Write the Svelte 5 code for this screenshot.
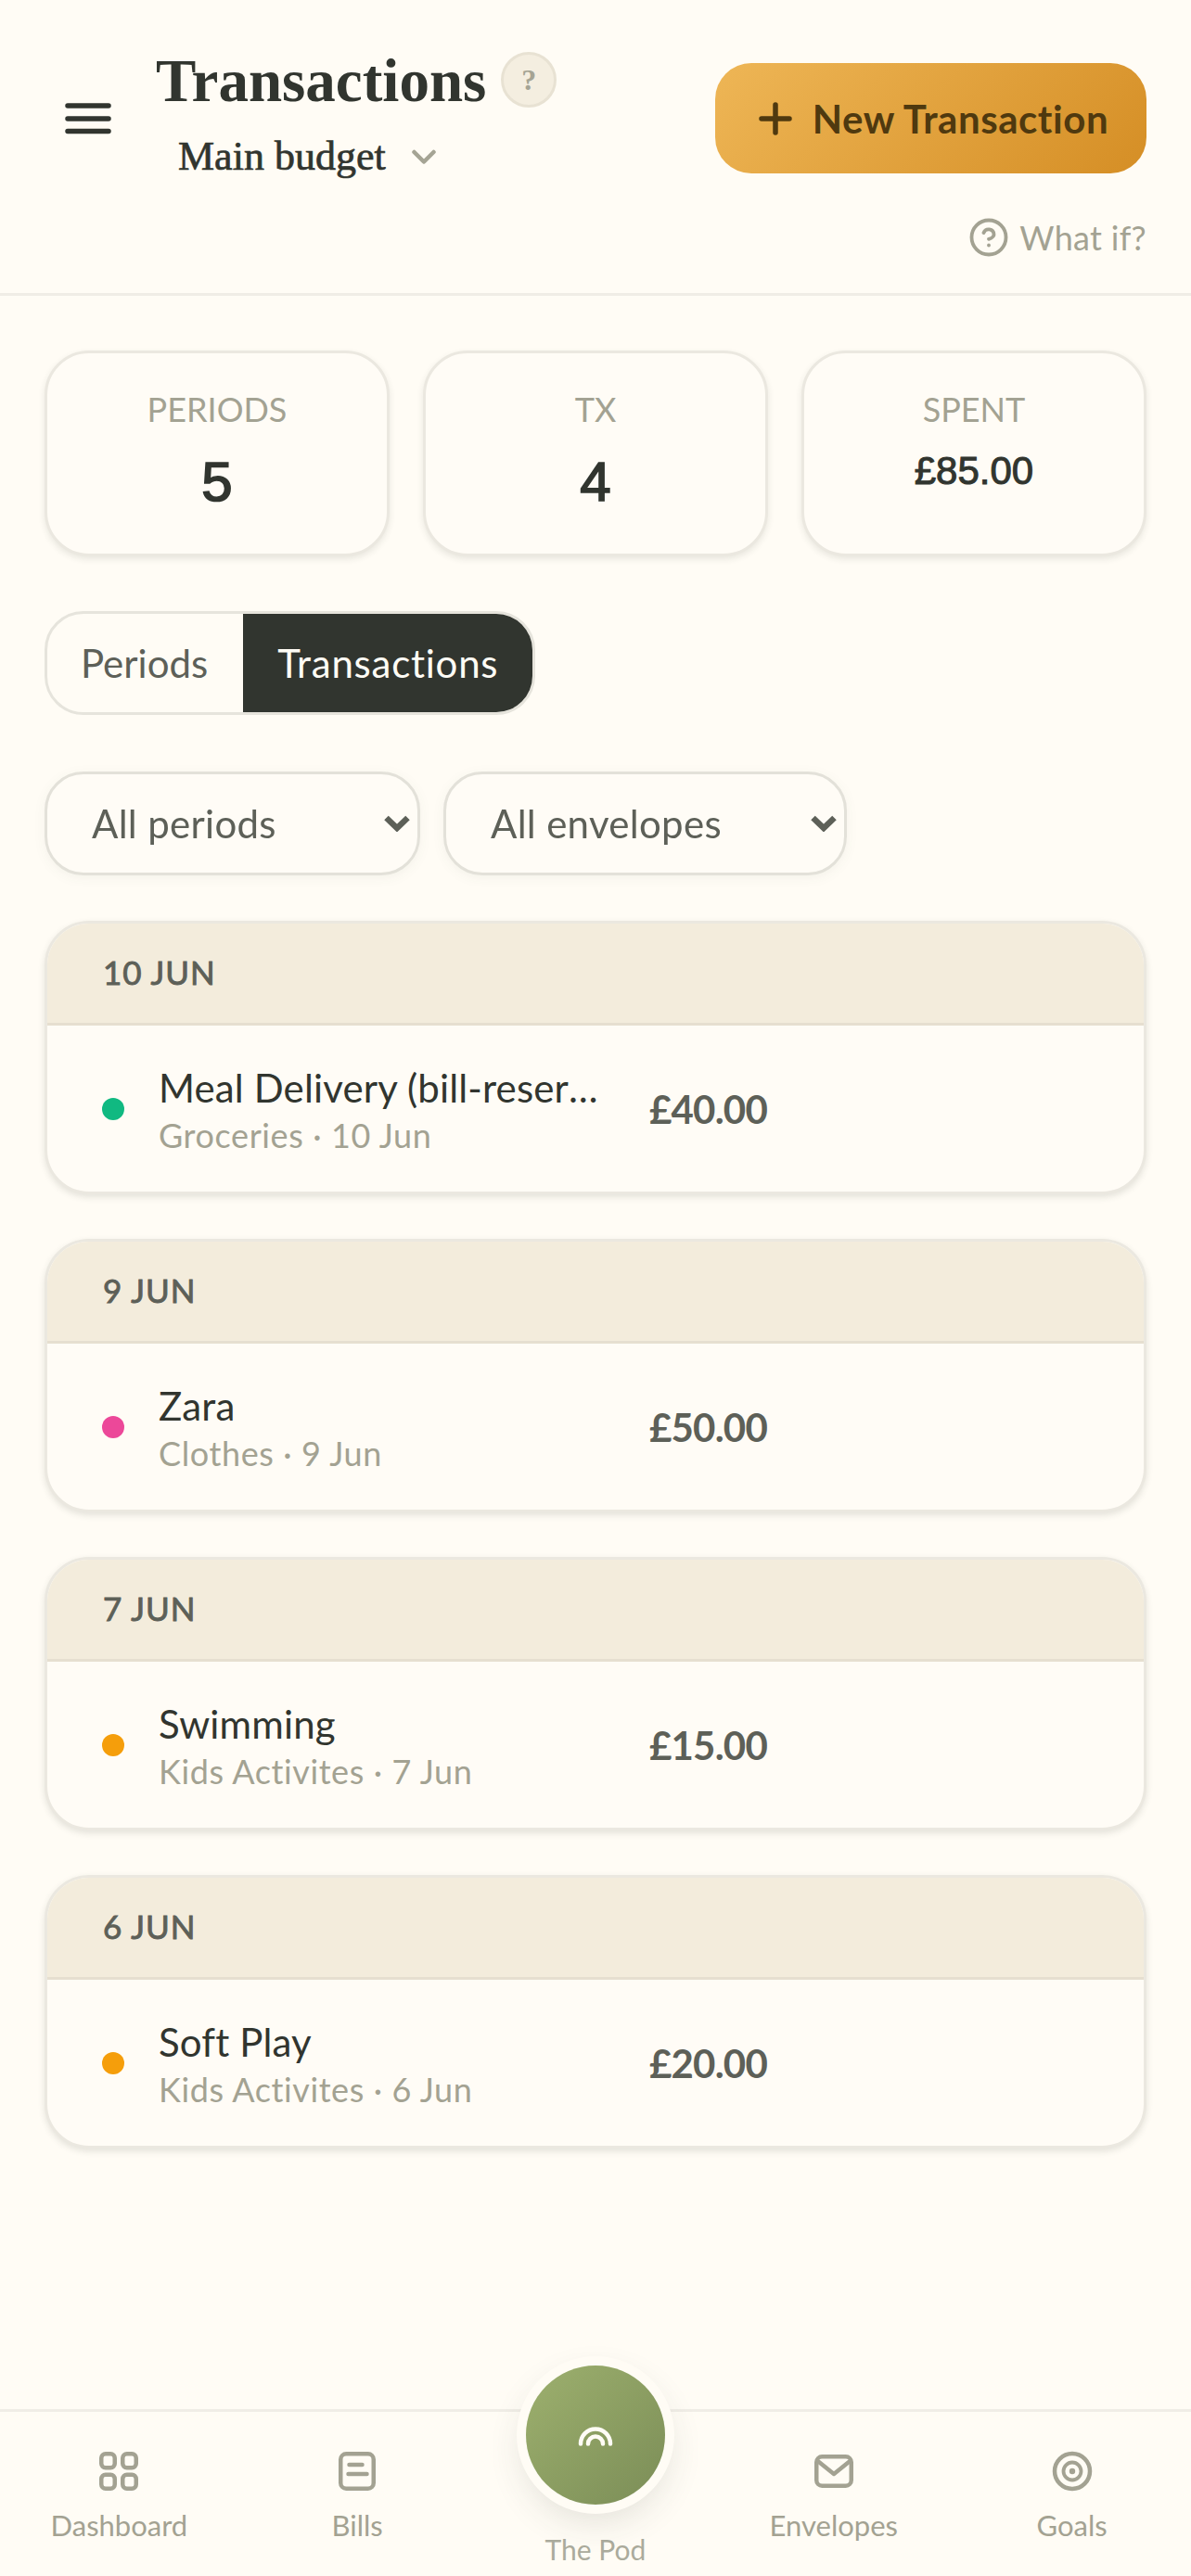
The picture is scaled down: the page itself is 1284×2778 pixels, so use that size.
<script>
  const stats = [
    { label: 'PERIODS', value: '5' },
    { label: 'TX', value: '4' },
    { label: 'SPENT', value: '£85.00', small: true }
  ];

  const groups = [
    { day: '10 JUN', name: 'Meal Delivery (bill-reserve)', sub: 'Groceries · 10 Jun', amount: '£40.00', color: '#10b981' },
    { day: '9 JUN', name: 'Zara', sub: 'Clothes · 9 Jun', amount: '£50.00', color: '#ec4899' },
    { day: '7 JUN', name: 'Swimming', sub: 'Kids Activites · 7 Jun', amount: '£15.00', color: '#f59e0b' },
    { day: '6 JUN', name: 'Soft Play', sub: 'Kids Activites · 6 Jun', amount: '£20.00', color: '#f59e0b' }
  ];
</script>

<div class="page">
  <header class="top">
    <div class="left">
      <button class="hamburger" aria-label="Menu">
        <svg width="54" height="42" viewBox="0 0 54 42" fill="none" stroke="currentColor" stroke-width="5.5" stroke-linecap="round">
          <path d="M5 7h44M5 21h44M5 34.500h44" />
        </svg>
      </button>
      <div class="titles">
        <div class="title-row">
          <h1>Transactions</h1>
          <span class="help">?</span>
        </div>
        <div class="budget">
          <span>Main budget</span>
          <svg width="26" height="16" viewBox="0 0 26 16" fill="none" stroke="#a5a494" stroke-width="4.500" stroke-linecap="round" stroke-linejoin="round">
            <path d="M2.500 3L13 13.500L23.500 3" />
          </svg>
        </div>
      </div>
    </div>
    <div class="right">
      <button class="new">
        <svg width="36" height="36" viewBox="0 0 36 36" fill="none" stroke="currentColor" stroke-width="5.500" stroke-linecap="round">
          <path d="M18 3v30M3 18h30" />
        </svg>
        New Transaction
      </button>
      <button class="whatif">
        <svg width="42" height="42" viewBox="0 0 42 42" fill="none" stroke="currentColor" stroke-width="3.800" stroke-linecap="round" stroke-linejoin="round">
          <circle cx="21" cy="21" r="18.500" />
          <path d="M15.500 16a5.700 5.700 0 0 1 11 1.800c0 3.700-5.500 5-5.500 5" />
          <path d="M21 29.500h.02" />
        </svg>
        What if?
      </button>
    </div>
  </header>

  <main>
    <section class="stats">
      {#each stats as s}
        <div class="stat">
          <div class="stat-label">{s.label}</div>
          <div class="stat-value" class:small={s.small}>{s.value}</div>
        </div>
      {/each}
    </section>

    <div class="tabs">
      <button class="tab">Periods</button>
      <button class="tab active">Transactions</button>
    </div>

    <div class="filters">
      <div class="select one">
        <select aria-label="Period"><option>All periods</option></select>
        <svg width="28" height="18" viewBox="0 0 28 18" fill="none" stroke="#5d6058" stroke-width="6.500">
          <path d="M2.500 3L14 14L25.500 3" />
        </svg>
      </div>
      <div class="select two">
        <select aria-label="Envelope"><option>All envelopes</option></select>
        <svg width="28" height="18" viewBox="0 0 28 18" fill="none" stroke="#5d6058" stroke-width="6.500">
          <path d="M2.500 3L14 14L25.500 3" />
        </svg>
      </div>
    </div>

    <div class="list">
      {#each groups as g}
        <article class="group">
          <div class="day">{g.day}</div>
          <div class="row">
            <span class="dot" style="background:{g.color}"></span>
            <div class="info">
              <div class="name">{g.name}</div>
              <div class="sub">{g.sub}</div>
            </div>
            <div class="amount">{g.amount}</div>
          </div>
        </article>
      {/each}
    </div>
  </main>

  <nav class="bottom">
    <div class="item">
      <svg width="48" height="48" viewBox="0 0 48 48" fill="none" stroke="currentColor" stroke-width="4.500">
        <rect x="5.250" y="5.250" width="14.500" height="15" rx="4.500" />
        <rect x="28.250" y="5.250" width="14.500" height="15" rx="4.500" />
        <rect x="5.250" y="27.750" width="14.500" height="15" rx="4.500" />
        <rect x="28.250" y="27.750" width="14.500" height="15" rx="4.500" />
      </svg>
      <span>Dashboard</span>
    </div>
    <div class="item">
      <svg width="48" height="48" viewBox="0 0 48 48" fill="none" stroke="currentColor" stroke-width="4.500" stroke-linecap="round">
        <rect x="6.250" y="5.250" width="35.500" height="37.500" rx="6" />
        <path d="M15.500 17h14M14.500 27h20" />
      </svg>
      <span>Bills</span>
    </div>
    <div class="item pod">
      <div class="pod-btn">
        <svg width="40" height="26" viewBox="0 0 40 26" fill="none" stroke="#fffcf5" stroke-width="4.500" stroke-linecap="round">
          <path d="M4 22.500a16 16 0 0 1 32 0" />
          <path d="M12 22.500a8 8 0 0 1 16 0" />
        </svg>
      </div>
      <span>The Pod</span>
    </div>
    <div class="item">
      <svg width="48" height="48" viewBox="0 0 48 48" fill="none" stroke="currentColor" stroke-width="4.500" stroke-linejoin="round">
        <rect x="5.250" y="8.250" width="37.500" height="31.500" rx="6" />
        <path d="M6 12.500L24 27L42 12.500" />
      </svg>
      <span>Envelopes</span>
    </div>
    <div class="item">
      <svg width="48" height="48" viewBox="0 0 48 48" fill="none" stroke="currentColor" stroke-width="4.500">
        <circle cx="24" cy="24" r="19" />
        <circle cx="24" cy="24" r="9.500" stroke-width="3.800" />
        <circle cx="24" cy="24" r="3.200" fill="currentColor" stroke="none" />
      </svg>
      <span>Goals</span>
    </div>
  </nav>
</div>

<style>
  :global(body) {
    background: #fffcf5;
    font-family: 'Lato', 'Liberation Sans', sans-serif;
    color: #31352f;
  }

  button {
    font: inherit;
    background: none;
    border: none;
    padding: 0;
    color: inherit;
  }

  .page {
    height: 2778px;
    display: flex;
    flex-direction: column;
    overflow: hidden;
  }

  .top {
    height: 316px;
    flex: none;
    box-sizing: content-box;
    border-bottom: 3px solid #f0ede6;
    padding: 0 48px 0 68px;
    display: flex;
    justify-content: space-between;
  }

  .left {
    display: flex;
    gap: 46px;
    align-items: flex-start;
  }

  .hamburger {
    margin-top: 107px;
    height: 42px;
    color: #31352f;
  }

  .titles {
    padding-top: 51px;
  }

  .title-row {
    display: flex;
    align-items: center;
    gap: 16px;
  }

  h1 {
    margin: 0;
    font: 700 65px/72px 'Liberation Serif', serif;
    color: #31352f;
  }

  .help {
    width: 54px;
    height: 54px;
    margin-top: -3px;
    border: 3px solid #e8e2d3;
    border-radius: 50%;
    background: #f4eee0;
    color: #a5a494;
    display: flex;
    align-items: center;
    justify-content: center;
    font: 700 32px/1 'Liberation Serif', serif;
  }

  .budget {
    margin: 21px 0 0 24px;
    display: flex;
    align-items: center;
    gap: 28px;
    font: 400 44px/50px 'Liberation Serif', serif;
    -webkit-text-stroke: 0.7px #31352f;
    color: #31352f;
  }

  .right {
    padding-top: 68px;
    display: flex;
    flex-direction: column;
    align-items: flex-end;
    gap: 47px;
  }

  .new {
    width: 465px;
    height: 119px;
    box-sizing: border-box;
    padding-left: 6px;
    border-radius: 39px;
    background: linear-gradient(135deg, #eeb656, #d58e25);
    color: #4f390f;
    font-weight: 700;
    font-size: 42px;
    letter-spacing: 0.55px;
    display: flex;
    align-items: center;
    justify-content: center;
    gap: 22px;
  }

  .whatif {
    display: flex;
    align-items: center;
    gap: 12px;
    color: #a3a292;
    font-size: 36px;
    letter-spacing: 0.3px;
  }

  main {
    flex: 1;
    padding: 59px 48px 0;
  }

  .stats {
    display: grid;
    grid-template-columns: repeat(3, 1fr);
    gap: 36px;
  }

  .stat {
    height: 222px;
    box-sizing: border-box;
    border: 3px solid #ebe8e0;
    border-radius: 48px;
    background: #fffcf6;
    box-shadow: 0 3px 7px rgba(49, 53, 47, 0.11);
    padding-top: 36px;
    text-align: center;
  }

  .stat-label {
    font-size: 36px;
    line-height: 48px;
    color: #a3a292;
  }

  .stat-value {
    margin-top: 19px;
    font: 400 60px/72px 'Liberation Sans', sans-serif;
    -webkit-text-stroke: 1.7px #31352f;
  }

  .stat-value.small {
    margin-top: 13px;
    font-size: 42px;
    line-height: 60px;
    -webkit-text-stroke: 1px #31352f;
  }

  .tabs {
    margin-top: 59px;
    display: inline-flex;
    height: 112px;
    box-sizing: border-box;
    border: 3px solid #e6e4dc;
    border-radius: 42px;
    overflow: hidden;
    vertical-align: top;
  }

  .tab {
    padding: 0 38px 0 36px;
    font-size: 42px;
    color: #5d6058;
  }

  .tab.active {
    padding: 0 37px;
    background: #31352f;
    color: #fffcf5;
    letter-spacing: 0.75px;
  }

  .filters {
    margin-top: 61px;
    display: flex;
    gap: 25px;
  }

  .select {
    position: relative;
    filter: drop-shadow(0 3px 6px rgba(49, 53, 47, 0.05));
  }

  .select.one { width: 405px; }
  .select.two { width: 435px; }

  select {
    appearance: none;
    width: 100%;
    height: 112px;
    box-sizing: border-box;
    border: 3px solid #e3e1d9;
    border-radius: 42px;
    background: #fffcf6;
    padding: 0 48px;
    font: inherit;
    font-size: 42px;
    letter-spacing: 0.3px;
    color: #5d6058;
  }

  .select svg {
    position: absolute;
    right: 11px;
    top: 47px;
  }

  .list {
    margin-top: 49px;
    display: flex;
    flex-direction: column;
    gap: 48px;
  }

  .group {
    height: 295px;
    box-sizing: border-box;
    border: 3px solid #ebe8e0;
    border-radius: 48px;
    background: #fffcf6;
    box-shadow: 0 3px 7px rgba(49, 53, 47, 0.13);
    overflow: hidden;
  }

  .day {
    height: 110px;
    box-sizing: border-box;
    padding: 0 0 4px 60px;
    background: #f3ecdc;
    border-bottom: 3px solid #e6dfd0;
    display: flex;
    align-items: center;
    font-size: 35px;
    letter-spacing: 1px;
    -webkit-text-stroke: 0.9px #5d6058;
    color: #5d6058;
  }

  .row {
    display: flex;
    align-items: center;
    height: 179px;
    padding-left: 59px;
  }

  .dot {
    width: 24px;
    height: 24px;
    border-radius: 50%;
    flex: none;
  }

  .info {
    width: 482px;
    margin: 0 47px 0 37px;
    flex: none;
  }

  .name {
    font-size: 42px;
    line-height: 54px;
    padding-top: 3px;
    letter-spacing: 0.15px;
    white-space: nowrap;
    overflow: hidden;
    text-overflow: ellipsis;
  }

  .sub {
    font-size: 36px;
    line-height: 48px;
    letter-spacing: 0.6px;
    color: #a3a292;
  }

  .amount {
    font-size: 42px;
    font-weight: 700;
    letter-spacing: -0.8px;
    color: #5d6058;
  }

  .bottom {
    height: 177px;
    flex: none;
    border-top: 3px solid #f0ede6;
    display: grid;
    grid-template-columns: repeat(5, 1fr);
  }

  .item {
    position: relative;
    display: flex;
    flex-direction: column;
    align-items: center;
    padding-top: 40px;
    color: #a3a292;
    font-size: 31px;
  }

  .item span {
    margin-top: 13px;
    line-height: 42px;
  }

  .pod span {
    margin-top: 87px;
    font-size: 30px;
    color: #abab9c;
  }

  .pod-btn {
    position: absolute;
    top: -50px;
    left: 50%;
    transform: translateX(-50%);
    width: 150px;
    height: 150px;
    border-radius: 50%;
    background: linear-gradient(135deg, #9db06e, #7b8d57);
    box-shadow: 0 0 0 10px #fffcf5, 0 15px 40px rgba(49, 53, 47, 0.16);
    display: flex;
    align-items: center;
    justify-content: center;
  }
</style>
